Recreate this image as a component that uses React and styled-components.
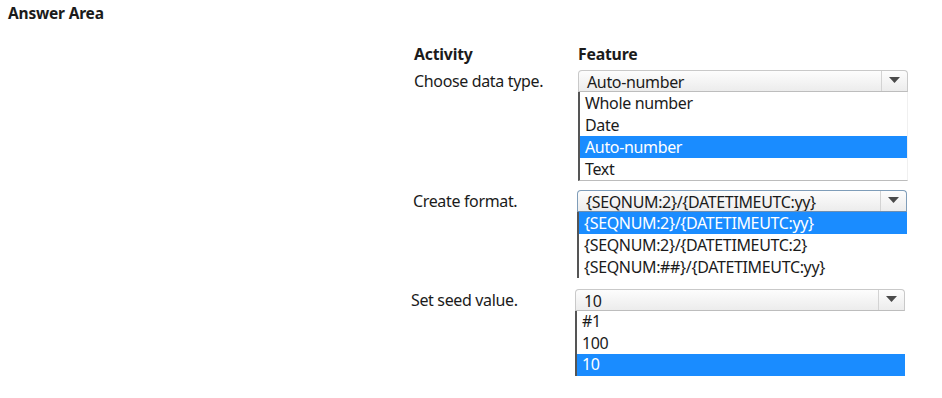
import React from 'react';
import styled, { createGlobalStyle } from 'styled-components';

const GlobalStyle = createGlobalStyle`
  body {
    margin: 0;
    background: #fff;
    font-family: 'Noto Sans', 'Open Sans', sans-serif;
    color: #1b1b1b;
  }
`;

const Page = styled.div`
  padding: 3px 8px;
  width: 942px;
  height: 398px;
  box-sizing: border-box;
`;

const Title = styled.div`
  font-size: 15.5px;
  font-weight: 700;
  line-height: 20px;
  letter-spacing: -0.2px;
`;

const Table = styled.div`
  margin-left: 406px;
  margin-top: 21px;
  display: flex;
  flex-direction: column;
`;

const Row = styled.div`
  display: grid;
  grid-template-columns: 164px 330px;
  margin-top: ${({ top }) => top || 0}px;
  margin-left: ${({ shift }) => shift || 0}px;
`;

const Head = styled.div`
  font-size: 15.8px;
  font-weight: 700;
  line-height: 20px;
  letter-spacing: -0.2px;
`;

const Label = styled.div`
  font-size: 16px;
  line-height: 20px;
  padding-top: ${({ pad }) => pad || 0}px;
  letter-spacing: -0.35px;
`;

const Select = styled.div`
  display: flex;
  height: 22px;
  box-sizing: border-box;
  border: 1px solid ${({ focused }) => (focused ? '#7f9db9' : '#c9c9c9')};
  border-bottom-color: ${({ focused }) => (focused ? '#6f8fb0' : '#bdbdbd')};
  border-radius: 4px 4px 0 0;
  background: linear-gradient(#fdfdfd, #ececec);
  overflow: hidden;
`;

const Value = styled.div`
  flex: 1;
  padding-left: 8px;
  font-size: 16px;
  line-height: 22px;
  letter-spacing: -0.35px;
  white-space: nowrap;
`;

const Arrow = styled.div`
  width: 25px;
  border-left: 1px solid #d3d3d3;
  display: flex;
  align-items: center;
  justify-content: center;
  padding-bottom: 2px;
`;

const List = styled.div`
  border-left: 2px solid #555;
  border-right: ${({ bottom }) => (bottom ? '1px solid #f0f0f0' : 'none')};
  border-bottom: ${({ bottom }) => (bottom ? '1px solid #bcbcbc' : 'none')};
  background: #fff;
`;

const Item = styled.div`
  height: ${({ h }) => h || 22}px;
  padding-left: 5px;
  font-size: 16px;
  line-height: ${({ h }) => h || 22}px;
  letter-spacing: -0.35px;
  white-space: nowrap;
  background: ${({ selected }) => (selected ? '#1a8cff' : 'transparent')};
  color: ${({ selected }) => (selected ? '#fff' : '#1b1b1b')};
`;

const Tri = () => (
  <svg width="11" height="6" viewBox="0 0 11 6">
    <path d="M0 0 L11 0 L5.5 6 Z" fill="#4a4a4a" />
  </svg>
);

const Dropdown = ({ value, options, selected, focused, bottom, h }) => (
  <div>
    <Select focused={focused}>
      <Value>{value}</Value>
      <Arrow>
        <Tri />
      </Arrow>
    </Select>
    <List bottom={bottom}>
      {options.map((o) => (
        <Item key={o} h={h} selected={o === selected}>
          {o}
        </Item>
      ))}
    </List>
  </div>
);

export default function App() {
  return (
    <Page>
      <GlobalStyle />
      <Title>Answer Area</Title>
      <Table>
        <Row>
          <Head>Activity</Head>
          <Head>Feature</Head>
        </Row>
        <Row top={6}>
          <Label pad={1}>Choose data type.</Label>
          <Dropdown
            value="Auto-number"
            options={['Whole number', 'Date', 'Auto-number', 'Text']}
            selected="Auto-number"
            bottom
          />
        </Row>
        <Row top={9} shift={-1}>
          <Label pad={1}>Create format.</Label>
          <Dropdown
            focused
            value="{SEQNUM:2}/{DATETIMEUTC:yy}"
            options={[
              '{SEQNUM:2}/{DATETIMEUTC:yy}',
              '{SEQNUM:2}/{DATETIMEUTC:2}',
              '{SEQNUM:##}/{DATETIMEUTC:yy}',
            ]}
            selected="{SEQNUM:2}/{DATETIMEUTC:yy}"
          />
        </Row>
        <Row top={11} shift={-3}>
          <Label pad={1}>Set seed value.</Label>
          <Dropdown
            value="10"
            options={['#1', '100', '10']}
            selected="10"
            h={21.5}
          />
        </Row>
      </Table>
    </Page>
  );
}
